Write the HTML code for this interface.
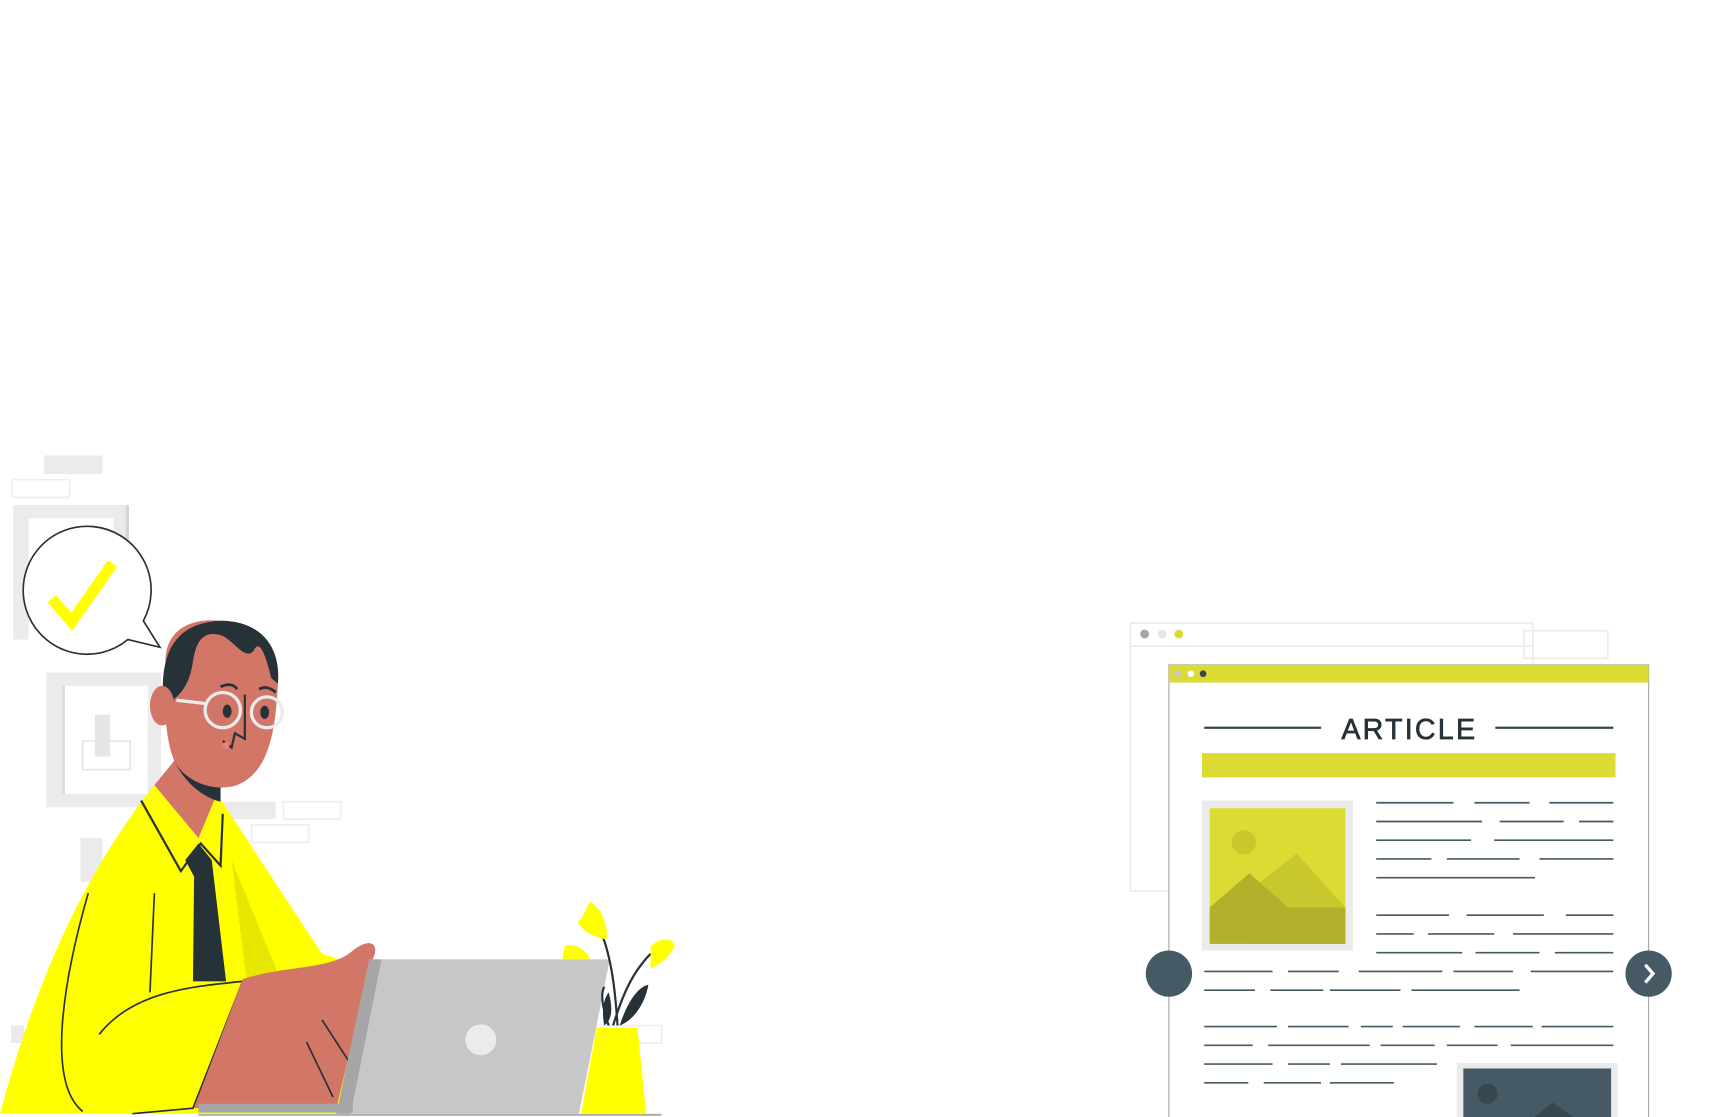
<!DOCTYPE html>
<html><head><meta charset="utf-8"><style>
html,body{margin:0;padding:0;background:#fff;width:1728px;height:1117px;overflow:hidden}
svg{display:block}
</style></head><body>
<svg width="1728" height="1117" viewBox="0 0 1567 1013" preserveAspectRatio="none" xmlns="http://www.w3.org/2000/svg">
<rect width="1567" height="1013" fill="#fff"/>
<g>
<rect x="40" y="413" width="53" height="17" fill="#ebebeb"/>
<rect x="11" y="435" width="52" height="16" fill="none" stroke="#eee" stroke-width="1.5"/>
<rect x="12" y="458" width="105" height="122" fill="#ebebeb"/>
<rect x="26" y="470" width="77" height="110" fill="#fff"/>
<rect x="114" y="458" width="3" height="122" fill="#d5d5d5"/>
<rect x="42" y="610" width="104" height="122" fill="#ebebeb"/>
<rect x="56" y="622" width="78" height="98" fill="#fff"/>
<rect x="56" y="622" width="3" height="98" fill="#ddd"/>
<rect x="86" y="648" width="14" height="38" fill="#e6e6e6"/>
<rect x="75" y="672" width="43" height="26" fill="none" stroke="#e6e6e6" stroke-width="1.5"/>
<rect x="200" y="727" width="50" height="16" fill="#ebebeb"/>
<rect x="257" y="727" width="52" height="16" fill="none" stroke="#eee" stroke-width="1.5"/>
<rect x="228" y="748" width="52" height="16" fill="none" stroke="#eee" stroke-width="1.5"/>
<rect x="73" y="760" width="20" height="40" fill="#ebebeb"/>
<rect x="10" y="930" width="12" height="16" fill="#ebebeb"/>
<rect x="540" y="930" width="60" height="16" fill="none" stroke="#eee" stroke-width="1.5"/>
</g>
<path d="M130,563 A58,58 0 1 0 116,580 L145,587 Z" fill="#fff" stroke="#263238" stroke-width="1.5"/>
<polyline points="47,543 65,564 102,511" fill="none" stroke="#ffff00" stroke-width="10"/>
<line x1="180" y1="1011" x2="600" y2="1011" stroke="#b0b0b0" stroke-width="2"/>
<path d="M0,1010 C30,900 70,800 140,712 L200,725 L292,865 L340,880 L330,1010 Z" fill="#ffff00"/>
<path d="M210,780 L255,890 L225,900 Z" fill="#e6e600"/>
<path d="M158,690 L200,712 L180,760 L140,712 Z" fill="#d27668"/>
<path d="M158,690 C170,715 190,725 200,727 L200,700 Z" fill="#263238"/>
<path d="M128,726 L164,790 L182,765 L200,785 L202,738" fill="none" stroke="#263238" stroke-width="2"/>
<path d="M168,780 L180,765 L192,780 L205,890 L175,890 L176,795 Z" fill="#263238"/>
<path d="M140,810 L136,900 M80,810 C60,880 40,980 75,1008 M185,900 L145,1000" fill="none" stroke="#263238" stroke-width="1.5"/>
<path d="M90,938 C120,900 170,895 220,890 L175,1005 L120,1010" fill="#ffff00" stroke="#263238" stroke-width="1.5"/>
<path d="M220,888 C260,875 300,880 320,862 C335,850 345,855 338,870 L330,900 L305,1005 L176,1005 Z" fill="#d27668"/>
<path d="M292,925 L318,965 M278,945 L302,995" stroke="#263238" stroke-width="1.5" fill="none"/>
<path d="M150,600 C150,570 175,560 200,563 C235,563 255,585 252,620 C250,660 245,700 215,712 C190,720 165,705 158,690 C150,670 148,640 150,600 Z" fill="#d27668"/>
<path d="M148,635 C145,590 160,565 200,563 C235,563 255,585 252,620 L246,615 C240,590 235,580 230,590 C222,600 212,580 200,576 C185,572 178,580 175,600 C172,620 165,630 150,640 Z" fill="#263238"/>
<ellipse cx="147" cy="640" rx="11" ry="18" fill="#d27668"/>
<circle cx="202" cy="644" r="16" fill="none" stroke="#ebebeb" stroke-width="3"/>
<circle cx="242" cy="646" r="14" fill="none" stroke="#ebebeb" stroke-width="3"/>
<line x1="160" y1="635" x2="186" y2="638" stroke="#ebebeb" stroke-width="3"/>
<ellipse cx="206" cy="645" rx="4" ry="6" fill="#263238"/>
<ellipse cx="240" cy="646" rx="4" ry="6" fill="#263238"/>
<path d="M200,623 C205,620 212,620 215,625 M235,625 C240,622 246,624 250,628" stroke="#263238" stroke-width="2.5" fill="none"/>
<path d="M222,630 L222,670 L213,665 L210,678 L202,672" stroke="#263238" stroke-width="2" fill="none"/>
<circle cx="205" cy="676" r="3" fill="#f08080"/>
<path d="M335,870 L553,870 L525,1010 L305,1010 Z" fill="#c7c7c7"/>
<path d="M335,870 L346,870 L318,1010 L305,1010 Z" fill="#a6a6a6"/>
<rect x="180" y="1001" width="140" height="8" fill="#a6a6a6"/>
<circle cx="436" cy="943" r="14" fill="#ebebeb"/>
<path d="M560,930 C558,900 555,870 545,845 M556,930 C565,900 575,880 590,865 M552,930 C545,910 545,900 548,895" stroke="#263238" stroke-width="2" fill="none"/>
<path d="M562,930 C570,905 580,895 588,893 C585,910 575,925 562,930 Z M548,930 C545,915 548,905 552,900 C556,915 555,925 548,930 Z" fill="#263238"/>
<path d="M535,818 C545,822 552,840 550,852 C540,850 528,845 524,836 C530,832 530,825 535,818 Z" fill="#ffff00"/>
<path d="M590,858 C600,850 610,850 612,858 C605,870 598,875 590,878 Z" fill="#ffff00"/>
<path d="M512,858 C522,855 532,862 535,870 L510,870 Z" fill="#ffff00"/>
<path d="M541,932 L578,932 L586,1010 L527,1010 Z" fill="#ffff00"/>

<rect x="1025" y="565" width="365" height="243" fill="#fff" stroke="#ebebeb" stroke-width="1.5"/>
<line x1="1025" y1="586" x2="1390" y2="586" stroke="#ebebeb" stroke-width="1.5"/>
<circle cx="1038" cy="575" r="4" fill="#a6a6a6"/>
<circle cx="1054" cy="575" r="4" fill="#e6e6e6"/>
<circle cx="1069" cy="575" r="4" fill="#dbdb33"/>
<rect x="1382" y="572" width="76" height="25" fill="none" stroke="#ebebeb" stroke-width="1.5"/>
<rect x="1060" y="603" width="435" height="420" fill="#fff" stroke="#a6a6a6" stroke-width="1"/>
<rect x="1060" y="603" width="435" height="16" fill="#dbdb33"/>
<circle cx="1068" cy="611" r="3" fill="#c7c7c7"/>
<circle cx="1080" cy="611" r="3" fill="#fff"/>
<circle cx="1091" cy="611" r="3" fill="#37474f"/>
<text x="1278" y="670" text-anchor="middle" font-family="Liberation Sans, sans-serif" font-size="26" letter-spacing="2" fill="#263238" stroke="#263238" stroke-width="0.6">ARTICLE</text>
<line x1="1092" y1="660" x2="1198" y2="660" stroke="#37474f" stroke-width="2"/>
<line x1="1356" y1="660" x2="1463" y2="660" stroke="#37474f" stroke-width="2"/>
<rect x="1090" y="683" width="375" height="22" fill="#dbdb33"/>
<rect x="1090" y="726" width="137" height="136" fill="#ebebeb"/>
<rect x="1097" y="733" width="123" height="123" fill="#dbdb33"/>
<circle cx="1128" cy="764" r="11" fill="#c8c82e"/>
<path d="M1130,810 L1176,774 L1220,823 L1220,856 L1130,856 Z" fill="#c8c82e"/>
<path d="M1097,823 L1133,792 L1168,823 L1220,823 L1220,856 L1097,856 Z" fill="#b0b02a"/>
<g stroke="#455a64" stroke-width="1.5" fill="none">
<path d="M1248,728h70M1337,728h50M1405,728h58"/>
<path d="M1248,745h96M1360,745h58M1432,745h31"/>
<path d="M1248,762h86M1355,762h108"/>
<path d="M1248,779h50M1312,779h66M1396,779h67"/>
<path d="M1248,796h144"/>
<path d="M1248,830h66M1330,830h70M1420,830h43"/>
<path d="M1248,847h34M1295,847h60M1372,847h91"/>
<path d="M1248,864h78M1338,864h58M1410,864h53"/>
<path d="M1092,881h62M1168,881h46M1232,881h76M1318,881h54M1388,881h75"/>
<path d="M1092,898h46M1152,898h48M1206,898h64M1280,898h98"/>
<path d="M1092,931h66M1168,931h55M1234,931h29M1272,931h52M1337,931h53M1398,931h65"/>
<path d="M1092,948h44M1150,948h92M1252,948h49M1312,948h46M1370,948h93"/>
<path d="M1092,965h62M1168,965h38M1216,965h87"/>
<path d="M1092,982h40M1146,982h52M1206,982h58"/>
</g>
<rect x="1321" y="964" width="146" height="50" fill="#ebebeb"/>
<rect x="1327" y="969" width="134" height="45" fill="#455a64"/>
<circle cx="1349" cy="992" r="9" fill="#37474f"/>
<path d="M1390,1014 L1408,1000 L1428,1014 Z" fill="#37474f"/>
<circle cx="1060" cy="883" r="21" fill="#455a64"/>
<circle cx="1495" cy="883" r="21" fill="#455a64"/>
<polyline points="1492,875 1499,883 1492,891" fill="none" stroke="#fff" stroke-width="3"/>
</svg>
</body></html>
